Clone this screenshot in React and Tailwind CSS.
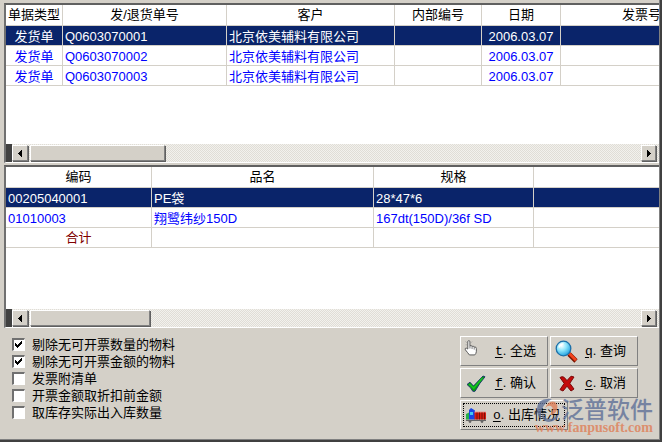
import React, { useState } from 'react'
import clsx from 'clsx'

const NOTES = [
  { type: '发货单', no: 'Q0603070001', customer: '北京依美辅料有限公司', date: '2006.03.07' },
  { type: '发货单', no: 'Q0603070002', customer: '北京依美辅料有限公司', date: '2006.03.07' },
  { type: '发货单', no: 'Q0603070003', customer: '北京依美辅料有限公司', date: '2006.03.07' },
]

const NOTE_COLUMNS = [
  { key: 'type', label: '单据类型', width: 'w-[57px]', center: true },
  { key: 'no', label: '发/退货单号', width: 'w-[164px]' },
  { key: 'customer', label: '客户', width: 'w-[168px]' },
  { key: 'inner', label: '内部编号', width: 'w-[87px]' },
  { key: 'date', label: '日期', width: 'w-[79px]', center: true },
  { key: 'invoice', label: '发票号', width: '' },
]

const ITEMS = [
  { code: '00205040001', name: 'PE袋', spec: '28*47*6' },
  { code: '01010003', name: '翔鹭纬纱150D', spec: '167dt(150D)/36f SD' },
]

const ITEM_COLUMNS = [
  { key: 'code', label: '编码', width: 'w-[146px]' },
  { key: 'name', label: '品名', width: 'w-[222px]' },
  { key: 'spec', label: '规格', width: 'w-[160px]' },
  { key: 'rest', label: '', width: '' },
]

const OPTIONS = [
  { id: 'no-qty', label: '剔除无可开票数量的物料', checked: true },
  { id: 'no-amount', label: '剔除无可开票金额的物料', checked: true },
  { id: 'with-list', label: '发票附清单', checked: false },
  { id: 'pre-discount', label: '开票金额取折扣前金额', checked: false },
  { id: 'real-stock', label: '取库存实际出入库数量', checked: false },
]

const RAISED = 'border border-t-white border-l-white border-r-[#808080] border-b-[#808080] bg-[#d4d0c8] shadow-[1px_1px_0_#606060]'

function Grid({ columns, rows, total, className }) {
  const [selected, setSelected] = useState(0)

  return (
    <table className={clsx('min-w-full table-fixed border-separate border-spacing-0', className)}>
      <colgroup>
        {columns.map(col => <col key={col.key} className={col.width} />)}
      </colgroup>
      <thead>
        <tr>
          {columns.map(col => (
            <th key={col.key} className="h-[21px] border-r border-b border-[#d4d0c8] p-0 text-center font-normal whitespace-nowrap text-black last:border-r-0">
              {col.label}
            </th>
          ))}
        </tr>
      </thead>
      <tbody>
        {rows.map((row, index) => (
          <tr
            key={index}
            onClick={() => setSelected(index)}
            className={selected === index ? 'bg-[#0a246a] text-white' : 'text-[#0000ff]'}
          >
            {columns.map(col => (
              <td
                key={col.key}
                className={clsx(
                  'h-5 border-r border-b border-[#d4d0c8] pt-[3px] pb-0 whitespace-nowrap last:border-r-0',
                  col.center ? 'px-0 text-center' : 'px-0.5'
                )}
              >
                {row[col.key]}
              </td>
            ))}
          </tr>
        ))}
        {total && (
          <tr className="text-[#800000]">
            {columns.map((col, index) => (
              <td key={col.key} className="h-5 border-r border-b border-[#d4d0c8] p-0 text-center last:border-r-0">
                {index === 0 ? total : ''}
              </td>
            ))}
          </tr>
        )}
      </tbody>
    </table>
  )
}

function Arrow({ flip }) {
  return (
    <svg viewBox="0 0 4 7" className={clsx('h-[7px] w-1', flip && 'rotate-180')} shapeRendering="crispEdges">
      <path d="M4 0v7h-1v-1h-1v-1h-1v-1h-1v-1h1v-1h1v-1h1v-1z" fill="#000" />
    </svg>
  )
}

function ScrollBar({ thumb }) {
  return (
    <div className="flex h-[18px] bg-[repeating-conic-gradient(#f2f1ed_0_25%,#e0ddd6_0_50%)] bg-[length:2px_2px] pr-0.5">
      <div className="w-1.5 bg-[#404040]" />
      <button type="button" aria-label="向左滚动" className={clsx('m-px ml-0 flex w-4 items-center justify-center', RAISED)}>
        <Arrow />
      </button>
      <div className={clsx('m-px', RAISED, thumb)} />
      <button type="button" aria-label="向右滚动" className={clsx('m-px ml-auto flex w-[15px] items-center justify-center', RAISED)}>
        <Arrow flip />
      </button>
    </div>
  )
}

function Panel({ children, thumb, height }) {
  return (
    <section className="border-t-2 border-b border-l-2 border-t-[#606060] border-b-white border-l-[#707070]">
      <div className={clsx('overflow-hidden bg-white', height)}>{children}</div>
      <ScrollBar thumb={thumb} />
    </section>
  )
}

function Option({ option, onToggle }) {
  return (
    <label htmlFor={option.id} className="flex h-[17px] items-center gap-[7px] whitespace-nowrap">
      <span className="grid size-[13px] shrink-0">
        <input
          id={option.id}
          type="checkbox"
          checked={option.checked}
          onChange={() => onToggle(option.id)}
          className="col-start-1 row-start-1 size-[13px] appearance-none border-t-2 border-r border-b border-l-2 border-t-[#707070] border-r-white border-b-white border-l-[#707070] bg-white"
        />
        {option.checked && (
          <svg viewBox="0 0 13 13" className="pointer-events-none col-start-1 row-start-1 size-[13px]" shapeRendering="crispEdges">
            <path d="M3 5h1v1h1v1h1v-1h1v-1h1v-1h1v-1h1v3h-1v1h-1v1h-1v1h-1v1h-1v-1h-1v-1h-1z" fill="#000" />
          </svg>
        )}
      </span>
      {option.label}
    </label>
  )
}

function HandIcon() {
  return (
    <svg viewBox="1 1 12 15" className="mb-1.5 h-4 w-[14px]">
      <path
        d="M4 8.500V2.200Q5 .9 6 2.200V6.500Q7.200 5.600 8 7Q9.300 6.200 10 7.600Q11.800 7 12 9V12Q11.800 13.800 10.500 15H5.500Q4 13 1.700 10.200Q1.200 8.500 2.500 8.600Q3.400 8.800 4 9.500Z"
        fill="#fff"
        stroke="#555"
        strokeWidth=".9"
        strokeLinejoin="round"
      />
      <path d="M6 6.500V9M8 7V9.500M10 7.600V10" stroke="#666" strokeWidth=".8" />
      <path d="M2 2.500l1 1M8 2.500l-1 1M2 5.500h1" stroke="#999" strokeWidth=".8" />
    </svg>
  )
}

function SearchIcon() {
  return (
    <svg viewBox="0 0 23 23" className="ml-px size-[23px]">
      <defs>
        <radialGradient id="lens" cx=".36" cy=".3" r=".75">
          <stop offset="0" stopColor="#ffffff" />
          <stop offset=".45" stopColor="#8fe6fb" />
          <stop offset="1" stopColor="#1b9ee0" />
        </radialGradient>
      </defs>
      <path d="M14 14L21 21" stroke="#7a1400" strokeWidth="4.600" />
      <path d="M14.300 13.600L21 20.300" stroke="#f4441c" strokeWidth="2.800" />
      <circle cx="8.500" cy="8.500" r="7.300" fill="url(#lens)" stroke="#1c6fa8" strokeWidth="1.300" />
      <path d="M4 7.500Q5 4 8.500 3.800" stroke="#fff" strokeWidth="1.300" fill="none" />
    </svg>
  )
}

function CheckIcon() {
  return (
    <svg viewBox="0 0 20 17" className="ml-0.5 h-[17px] w-5">
      <path d="M1 9.500L4 7.200L7.500 11L17 1L19 1.800Q13.500 8 9 16.300H6.800Q5 12.500 1 9.500Z" fill="#0a9c12" stroke="#16306a" strokeWidth=".9" />
      <path d="M3.300 9.200L7.700 13.200L16.500 3" stroke="#14c420" strokeWidth="1.600" fill="none" />
    </svg>
  )
}

function CrossIcon() {
  return (
    <svg viewBox="0 0 16 17" className="ml-[5px] h-[17px] w-4">
      <path
        d="M1 2.500Q3 1 5 2.200L8 5.600L12 1.200L15 2L10.800 8.300L15 14L12 16L8 11.200L4 16L1 14.600L5.200 8.400Z"
        fill="#c40a0a"
        stroke="#7c0808"
        strokeWidth="1"
      />
    </svg>
  )
}

function TruckIcon() {
  return (
    <svg viewBox="0 0 22 17" className="h-[17px] w-[22px]">
      <path d="M1 7L4 5.500V12.500H1Z" fill="#28b04a" />
      <path d="M4 3L6 1L10 3.500V12.500H4Z" fill="#1746e6" />
      <path d="M5 5h3v3h-3z" fill="#45c8f0" />
      <path d="M9.500 5h11.500v7.500h-11.500z" fill="#d81c10" />
      <path d="M9.500 5h11.500" stroke="#e89a90" strokeWidth="1" />
      <path d="M12 5.500v7M14.500 5.500v7M17 5.500v7M19.500 5.500v7" stroke="#6e1008" strokeWidth=".9" />
      <path d="M1 12.800h20v1.200h-20z" fill="#666" />
      <circle cx="5" cy="14.500" r="1.400" fill="#666" />
      <circle cx="17" cy="14.500" r="1.400" fill="#666" />
    </svg>
  )
}

function ActionButton({ icon, hotkey, label, focused }) {
  return (
    <button
      type="button"
      className={clsx(
        'flex h-[30px] items-center border border-t-white border-r-[#808080] border-b-[#808080] border-l-white p-0.5 whitespace-nowrap',
        focused ? 'w-[108px]' : 'w-[88px]'
      )}
    >
      <span
        className={clsx(
          'flex h-full w-full items-center border',
          focused ? 'border-dotted border-black pl-px pr-1' : 'border-transparent pr-2'
        )}
      >
        {icon}
        <span className="ml-auto">
          <span className="font-['Liberation_Mono',monospace] underline underline-offset-2">{hotkey}</span>
          . {label}
        </span>
      </span>
    </button>
  )
}

function Watermark() {
  return (
    <div className="pointer-events-none absolute right-1.5 bottom-1 flex flex-col items-end opacity-80">
      <div className="flex items-center">
        <svg viewBox="0 0 26 24" className="h-6 w-[26px]">
          <path d="M17 1Q3 -1 2 11Q2 17 6 22Q5 12 10 6Q13 3 17 1Z" fill="#5f7198" />
          <path d="M10 10Q14 2 20 4Q25 9 20 15Q18 17 15 17Q20 11 16 8Q13 7 10 10Z" fill="#df8058" />
          <path d="M8 14Q8 20 14 21Q20 21 24 15Q23 23 14 24Q5 23 8 14Z" fill="#5f7198" />
        </svg>
        <span className="text-[23px] leading-6 font-medium text-[#5f7198]">泛普软件</span>
      </div>
      <span className="font-['Liberation_Serif',serif] text-sm leading-3 font-bold text-[#df8058]">www.fanpusoft.com</span>
    </div>
  )
}

export default function App() {
  const [options, setOptions] = useState(OPTIONS)

  function toggle(id) {
    setOptions(value => value.map(item => (item.id === id ? { ...item, checked: !item.checked } : item)))
  }

  return (
    <main className="flex min-h-screen flex-col overflow-hidden border-r-2 border-b-2 border-[#404040] bg-[#d4d0c8] font-['Liberation_Sans','Noto_Sans_CJK_SC',sans-serif] text-[13px] leading-4 text-black">
      <div className="flex grow flex-col border-r border-b border-[#808080]">
        <div className="flex flex-col gap-0.5 pt-[3px] pl-1">
          <Panel height="min-h-[139px]" thumb="w-[135px]">
            <Grid columns={NOTE_COLUMNS} rows={NOTES} className="w-[716px]" />
          </Panel>
          <Panel height="min-h-[142px]" thumb="w-[120px]">
            <Grid columns={ITEM_COLUMNS} rows={ITEMS} total="合计" className="w-full" />
          </Panel>
        </div>
        <div className="relative flex justify-between pt-2 pr-[21px] pb-2 pl-3">
          <div className="flex flex-col">
            {options.map(option => <Option key={option.id} option={option} onToggle={toggle} />)}
          </div>
          <div className="flex flex-col gap-0.5">
            <div className="flex gap-0.5">
              <ActionButton icon={<HandIcon />} hotkey="t" label="全选" />
              <ActionButton icon={<SearchIcon />} hotkey="q" label="查询" />
            </div>
            <div className="flex gap-0.5">
              <ActionButton icon={<CheckIcon />} hotkey="f" label="确认" />
              <ActionButton icon={<CrossIcon />} hotkey="c" label="取消" />
            </div>
            <ActionButton icon={<TruckIcon />} hotkey="o" label="出库情况" focused />
          </div>
          <Watermark />
        </div>
      </div>
    </main>
  )
}
